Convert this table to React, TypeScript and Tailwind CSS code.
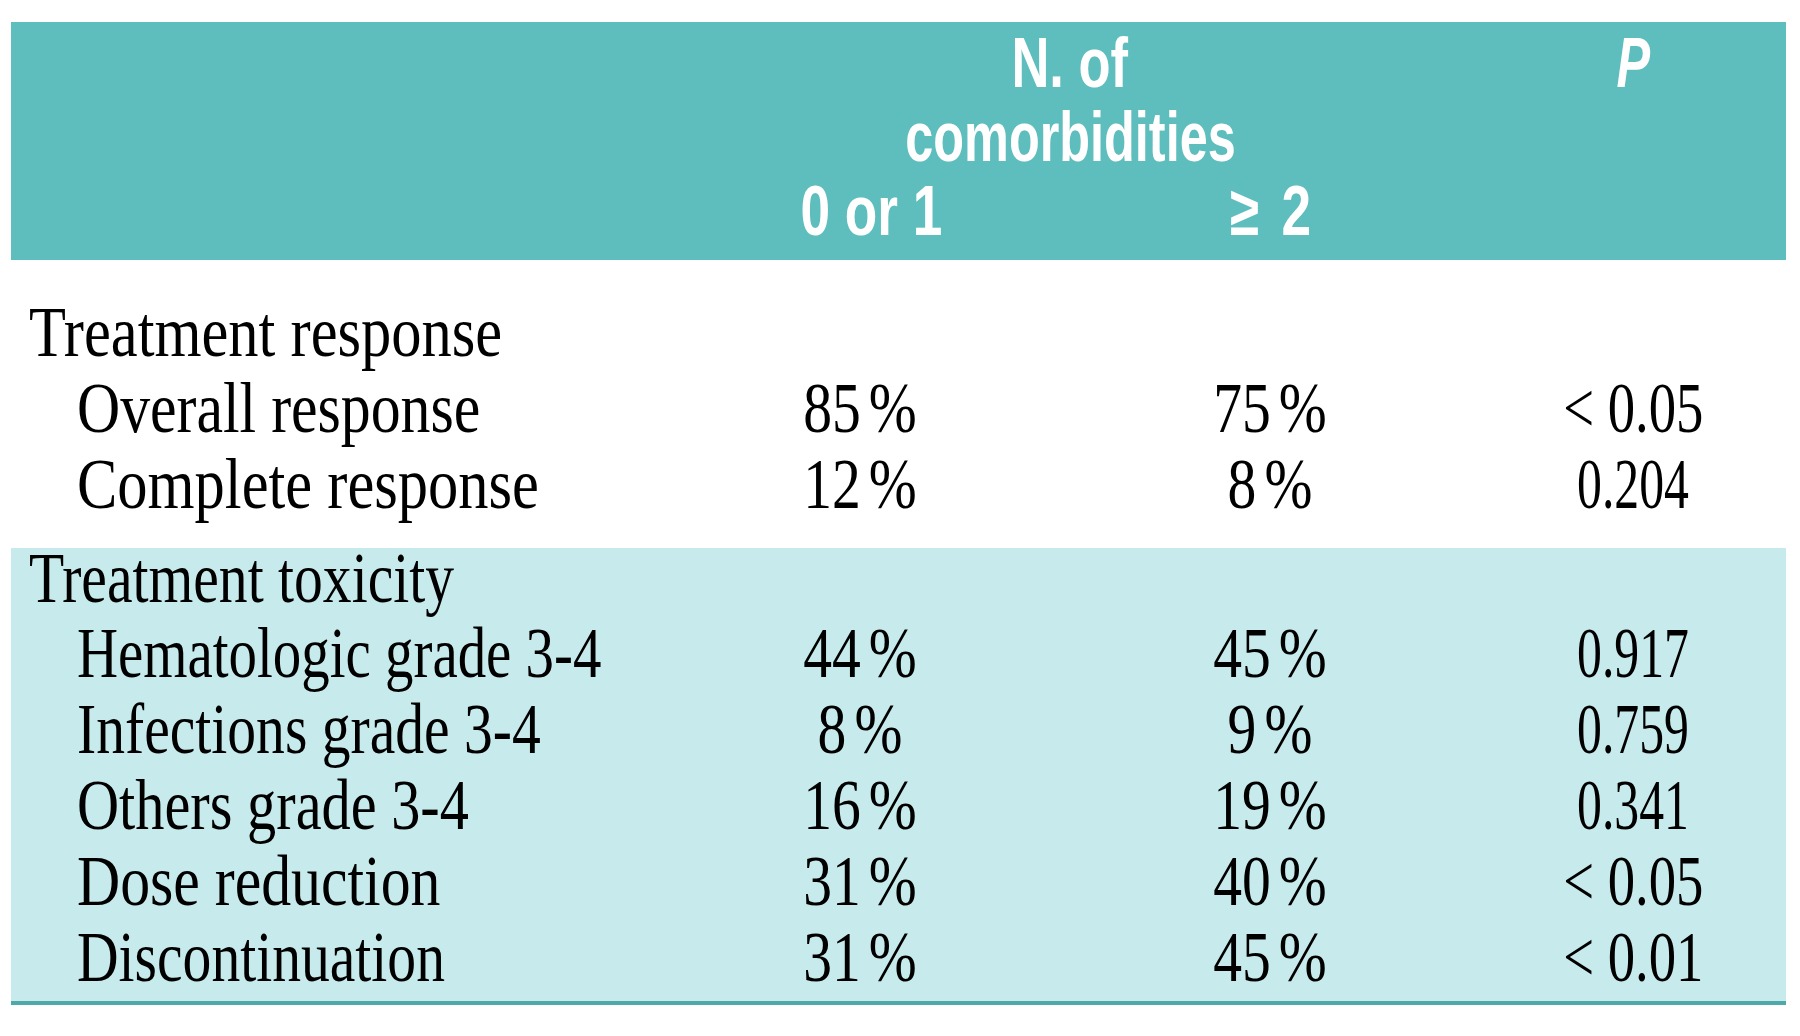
import React from "react";

const serif = "font-['Liberation_Serif','Times_New_Roman',serif]";
const sans = "font-['Liberation_Sans',Arial,sans-serif]";

type Row = { label: string; sc: string; a: string; b: string; p: string };

const response: Row[] = [
  { label: "Overall response", sc: "scale-x-[0.83]", a: "85 %", b: "75 %", p: "< 0.05" },
  { label: "Complete response", sc: "scale-x-[0.84]", a: "12 %", b: "8 %", p: "0.204" },
];

const toxicity: Row[] = [
  { label: "Hematologic grade 3-4", sc: "scale-x-[0.79]", a: "44 %", b: "45 %", p: "0.917" },
  { label: "Infections grade 3-4", sc: "scale-x-[0.80]", a: "8 %", b: "9 %", p: "0.759" },
  { label: "Others grade 3-4", sc: "scale-x-[0.81]", a: "16 %", b: "19 %", p: "0.341" },
  { label: "Dose reduction", sc: "scale-x-[0.83]", a: "31 %", b: "40 %", p: "< 0.05" },
  { label: "Discontinuation", sc: "scale-x-[0.80]", a: "31 %", b: "45 %", p: "< 0.01" },
];

function Label({ text, sc, indent }: { text: string; sc: string; indent?: boolean }) {
  return (
    <div className={`whitespace-nowrap ${indent ? "pl-[66px]" : "pl-[18px]"}`}>
      <span className={`inline-block origin-left ${sc}`}>{text}</span>
    </div>
  );
}

function Pct({ text }: { text: string }) {
  return (
    <div className="whitespace-nowrap text-center">
      <span className="inline-block origin-center scale-x-[0.8] [word-spacing:-8px]">{text}</span>
    </div>
  );
}

function PVal({ text }: { text: string }) {
  const lt = text.startsWith("<");
  return (
    <div className="whitespace-nowrap text-center">
      <span className={`inline-block origin-center ${lt ? "scale-x-[0.76]" : "scale-x-[0.69]"}`}>{text}</span>
    </div>
  );
}

function DataRow({ r }: { r: Row }) {
  return (
    <div className="grid h-[76px] grid-cols-[649px_400px_420px_306px] leading-[76px]">
      <Label text={r.label} sc={r.sc} indent />
      <Pct text={r.a} />
      <Pct text={r.b} />
      <PVal text={r.p} />
    </div>
  );
}

export default function App() {
  return (
    <div className={`h-[1036px] w-[1800px] overflow-hidden bg-white pl-[11px] pt-[22px] text-black ${serif}`}>
      <div className="w-[1775px]">
        {/* Header */}
        <div
          className={`grid h-[238px] grid-cols-[649px_400px_420px_306px] grid-rows-[74px_74px_74px] bg-[#5ebdbd] pt-[4px] text-[70px] font-bold leading-[74px] text-white ${sans}`}
        >
          <div className="col-start-2 col-end-4 row-start-1 row-end-3 text-center whitespace-nowrap">
            <div>
              <span className="inline-block origin-center scale-x-[0.75]">N. of</span>
            </div>
            <div>
              <span className="inline-block origin-center scale-x-[0.72]">comorbidities</span>
            </div>
          </div>
          <div className="col-start-4 row-start-1 text-center">
            <span className="inline-block origin-center scale-x-[0.72] italic">P</span>
          </div>
          <div className="col-start-2 row-start-3 pl-[22px] text-center whitespace-nowrap">
            <span className="inline-block origin-center scale-x-[0.76]">0 or 1</span>
          </div>
          <div className="col-start-3 row-start-3 text-center whitespace-nowrap">
            <span className="inline-block origin-center scale-x-[0.76] [word-spacing:10px]">≥ 2</span>
          </div>
        </div>

        {/* Treatment response */}
        <div className="pt-[34px] pb-[26px] text-[72px]">
          <div className="h-[76px] leading-[76px]">
            <Label text="Treatment response" sc="scale-x-[0.84]" />
          </div>
          {response.map((r) => (
            <DataRow key={r.label} r={r} />
          ))}
        </div>

        {/* Treatment toxicity */}
        <div className="border-b-[4px] border-[#4fa9a9] bg-[#c7ebec] pb-[6px] text-[72px]">
          <div className="h-[67px] leading-[60px]">
            <Label text="Treatment toxicity" sc="scale-x-[0.80]" />
          </div>
          {toxicity.map((r) => (
            <DataRow key={r.label} r={r} />
          ))}
        </div>
      </div>
    </div>
  );
}
